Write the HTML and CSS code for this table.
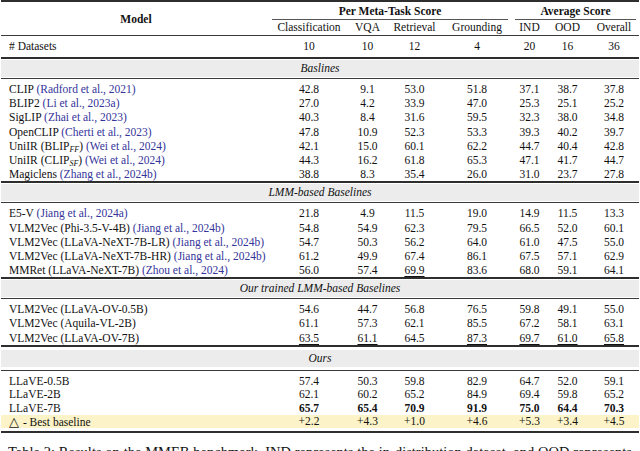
FILE: index.html
```html
<!DOCTYPE html>
<html>
<head>
<meta charset="utf-8">
<link rel="stylesheet" href="styles.css">
</head>
<body>
<div class="tbl">
  <div class="rule-top"></div>
  <div class="head">
    <div class="h-model">Model</div>
    <div class="h-group h-pm">Per Meta-Task Score</div>
    <div class="h-group h-avg">Average Score</div>
    <div class="h-sub c2">Classification</div>
    <div class="h-sub c3">VQA</div>
    <div class="h-sub c4">Retrieval</div>
    <div class="h-sub c5">Grounding</div>
    <div class="h-sub c6">IND</div>
    <div class="h-sub c7">OOD</div>
    <div class="h-sub c8">Overall</div>
  </div>
  <div class="rule-thin"></div>
  <div class="row ds">
    <div class="m"># Datasets</div><div>10</div><div>10</div><div>12</div><div>4</div><div>20</div><div>16</div><div>36</div>
  </div>

  <div class="rule-thick"></div>
  <div class="band">Baslines</div>
  <div class="rule-thin"></div>
  <div class="group">
    <div class="row"><div class="m">CLIP <span class="cite">(Radford et al., 2021)</span></div><div>42.8</div><div>9.1</div><div>53.0</div><div>51.8</div><div>37.1</div><div>38.7</div><div>37.8</div></div>
    <div class="row"><div class="m">BLIP2 <span class="cite">(Li et al., 2023a)</span></div><div>27.0</div><div>4.2</div><div>33.9</div><div>47.0</div><div>25.3</div><div>25.1</div><div>25.2</div></div>
    <div class="row"><div class="m">SigLIP <span class="cite">(Zhai et al., 2023)</span></div><div>40.3</div><div>8.4</div><div>31.6</div><div>59.5</div><div>32.3</div><div>38.0</div><div>34.8</div></div>
    <div class="row"><div class="m">OpenCLIP <span class="cite">(Cherti et al., 2023)</span></div><div>47.8</div><div>10.9</div><div>52.3</div><div>53.3</div><div>39.3</div><div>40.2</div><div>39.7</div></div>
    <div class="row"><div class="m">UniIR (BLIP<sub>FF</sub>) <span class="cite">(Wei et al., 2024)</span></div><div>42.1</div><div>15.0</div><div>60.1</div><div>62.2</div><div>44.7</div><div>40.4</div><div>42.8</div></div>
    <div class="row"><div class="m">UniIR (CLIP<sub>SF</sub>) <span class="cite">(Wei et al., 2024)</span></div><div>44.3</div><div>16.2</div><div>61.8</div><div>65.3</div><div>47.1</div><div>41.7</div><div>44.7</div></div>
    <div class="row"><div class="m">Magiclens <span class="cite">(Zhang et al., 2024b)</span></div><div>38.8</div><div>8.3</div><div>35.4</div><div>26.0</div><div>31.0</div><div>23.7</div><div>27.8</div></div>
  </div>

  <div class="rule-thick"></div>
  <div class="band">LMM-based Baselines</div>
  <div class="rule-thin"></div>
  <div class="group">
    <div class="row"><div class="m">E5-V <span class="cite">(Jiang et al., 2024a)</span></div><div>21.8</div><div>4.9</div><div>11.5</div><div>19.0</div><div>14.9</div><div>11.5</div><div>13.3</div></div>
    <div class="row"><div class="m">VLM2Vec (Phi-3.5-V-4B) <span class="cite">(Jiang et al., 2024b)</span></div><div>54.8</div><div>54.9</div><div>62.3</div><div>79.5</div><div>66.5</div><div>52.0</div><div>60.1</div></div>
    <div class="row"><div class="m">VLM2Vec (LLaVA-NeXT-7B-LR) <span class="cite">(Jiang et al., 2024b)</span></div><div>54.7</div><div>50.3</div><div>56.2</div><div>64.0</div><div>61.0</div><div>47.5</div><div>55.0</div></div>
    <div class="row"><div class="m">VLM2Vec (LLaVA-NeXT-7B-HR) <span class="cite">(Jiang et al., 2024b)</span></div><div>61.2</div><div>49.9</div><div>67.4</div><div>86.1</div><div>67.5</div><div>57.1</div><div>62.9</div></div>
    <div class="row"><div class="m">MMRet (LLaVA-NeXT-7B) <span class="cite">(Zhou et al., 2024)</span></div><div>56.0</div><div>57.4</div><div><span class="u">69.9</span></div><div>83.6</div><div>68.0</div><div>59.1</div><div>64.1</div></div>
  </div>

  <div class="rule-thick"></div>
  <div class="band">Our trained LMM-based Baselines</div>
  <div class="rule-thin"></div>
  <div class="group">
    <div class="row"><div class="m">VLM2Vec (LLaVA-OV-0.5B)</div><div>54.6</div><div>44.7</div><div>56.8</div><div>76.5</div><div>59.8</div><div>49.1</div><div>55.0</div></div>
    <div class="row"><div class="m">VLM2Vec (Aquila-VL-2B)</div><div>61.1</div><div>57.3</div><div>62.1</div><div>85.5</div><div>67.2</div><div>58.1</div><div>63.1</div></div>
    <div class="row"><div class="m">VLM2Vec (LLaVA-OV-7B)</div><div><span class="u">63.5</span></div><div><span class="u">61.1</span></div><div>64.5</div><div><span class="u">87.3</span></div><div><span class="u">69.7</span></div><div><span class="u">61.0</span></div><div><span class="u">65.8</span></div></div>
  </div>

  <div class="rule-thick"></div>
  <div class="band band-last">Ours</div>
  <div class="rule-thin"></div>
  <div class="group last">
    <div class="row"><div class="m">LLaVE-0.5B</div><div>57.4</div><div>50.3</div><div>59.8</div><div>82.9</div><div>64.7</div><div>52.0</div><div>59.1</div></div>
    <div class="row"><div class="m">LLaVE-2B</div><div>62.1</div><div>60.2</div><div>65.2</div><div>84.9</div><div>69.4</div><div>59.8</div><div>65.2</div></div>
    <div class="row bold"><div class="m normal">LLaVE-7B</div><div>65.7</div><div>65.4</div><div>70.9</div><div>91.9</div><div>75.0</div><div>64.4</div><div>70.3</div></div>
    <div class="row delta"><div class="m"><span class="tri">△</span> - Best baseline</div><div>+2.2</div><div>+4.3</div><div>+1.0</div><div>+4.6</div><div>+5.3</div><div>+3.4</div><div>+4.5</div></div>
  </div>
  <div class="rule-thick"></div>
</div>
<p class="caption">Table 2: Results on the MMEB benchmark. IND represents the in-distribution dataset, and OOD represents the out-of-distribution dataset.</p>
</body>
</html>
```

FILE: styles.css
```css
html, body {
  margin: 0;
  padding: 0;
  background: #ffffff;
}
body {
  font-family: "Liberation Serif", "Times New Roman", serif;
  font-size: 11.5px;
  color: #111111;
  width: 640px;
  height: 451px;
  overflow: hidden;
}
.tbl {
  width: 638px;
  margin-left: 1px;
}
.rule-top {
  height: 2px;
  background: #2e2e2e;
}
.rule-thick {
  height: 2px;
  background: #2e2e2e;
}
.rule-thin {
  height: 1px;
  background: #3a3a3a;
}
.head {
  display: grid;
  grid-template-columns: 270px 76px 41px 53px 72px 33px 43px 50px;
  grid-template-rows: 18px 15px;
}
.h-model {
  grid-column: 1;
  grid-row: 1 / 3;
  display: flex;
  align-items: center;
  justify-content: center;
  font-weight: bold;
}
.h-group {
  grid-row: 1;
  font-weight: bold;
  text-align: center;
  line-height: 18px;
  border-bottom: 1px solid #555555;
  height: 17px;
}
.h-pm {
  grid-column: 2 / 6;
  margin: 0 5px 0 1px;
}
.h-avg {
  grid-column: 6 / 9;
  margin: 0 3px 0 2px;
}
.h-sub {
  grid-row: 2;
  text-align: center;
  line-height: 15px;
}
.c2 { grid-column: 2; }
.c3 { grid-column: 3; }
.c4 { grid-column: 4; }
.c5 { grid-column: 5; }
.c6 { grid-column: 6; }
.c7 { grid-column: 7; }
.c8 { grid-column: 8; }
.row {
  display: grid;
  grid-template-columns: 270px 76px 41px 53px 72px 33px 43px 50px;
  height: 14.2px;
  line-height: 14.2px;
  text-align: center;
  white-space: nowrap;
}
.row .m {
  text-align: left;
  padding-left: 8px;
}
.row.ds {
  height: 21px;
  line-height: 21px;
}
.band {
  height: 17px;
  line-height: 17px;
  margin: 1px 0;
  background: #ececec;
  text-align: center;
  font-style: italic;
}
.band.band-last {
  margin: 3px 0 3px;
}
.group {
  padding: 3px 0 0;
}
.group.last {
  padding: 4px 0 2.4px;
}
.group.last .row {
  height: 13.4px;
  line-height: 13.4px;
}
.cite {
  color: #34349a;
}
sub {
  font-size: 8px;
  font-style: italic;
  vertical-align: -2px;
  line-height: 0;
}
.u {
  text-decoration: underline;
  text-underline-offset: 2px;
  text-decoration-thickness: 1px;
}
.bold {
  font-weight: bold;
}
.normal {
  font-weight: normal;
}
.delta {
  background: #fcf4c8;
}
.tri {
  font-family: "DejaVu Sans", sans-serif;
  font-size: 13px;
  margin-right: 1px;
}
.caption {
  margin: 10px 0 0 8px;
  width: 624px;
  font-size: 14.5px;
  line-height: 18px;
  text-align: justify;
}
```
